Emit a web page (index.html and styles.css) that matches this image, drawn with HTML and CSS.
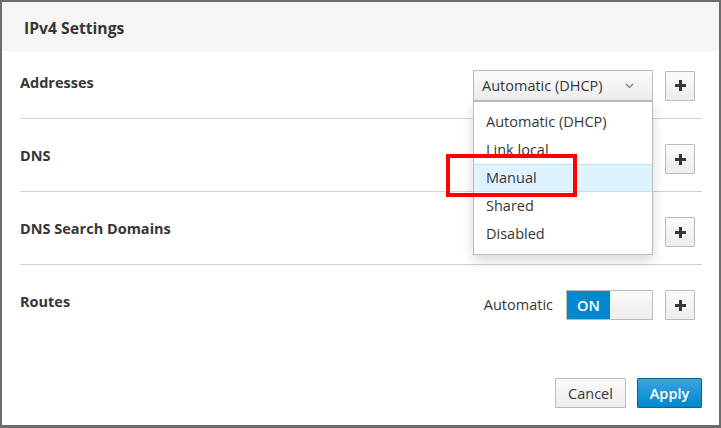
FILE: index.html
```html
<!DOCTYPE html>
<html>
<head>
<meta charset="utf-8">
<link rel="stylesheet" href="styles.css">
</head>
<body>
<div class="modal">
  <div class="modal-header"><h4 class="title">IPv4 Settings</h4></div>
  <div class="modal-body">
    <div class="row first">
      <div class="label">Addresses</div>
      <div class="controls">
        <div class="select-wrap">
          <div class="select">
            <span>Automatic (DHCP)</span>
            <svg class="chev" width="9" height="6" viewBox="0 0 9 6"><path d="M1 1 L4.5 4.5 L8 1" fill="none" stroke="#777" stroke-width="1.1"/></svg>
          </div>
          <ul class="menu">
            <li>Automatic (DHCP)</li>
            <li>Link local</li>
            <li class="active">Manual</li>
            <li>Shared</li>
            <li>Disabled</li>
          </ul>
          <div class="annot"></div>
        </div>
        <button class="btn plus"><svg width="11" height="11" viewBox="0 0 11 11"><rect x="4" y="0" width="3" height="11" fill="#363636"/><rect x="0" y="4" width="11" height="3" fill="#363636"/></svg></button>
      </div>
    </div>
    <div class="row">
      <div class="label">DNS</div>
      <div class="controls">
        <button class="btn plus"><svg width="11" height="11" viewBox="0 0 11 11"><rect x="4" y="0" width="3" height="11" fill="#363636"/><rect x="0" y="4" width="11" height="3" fill="#363636"/></svg></button>
      </div>
    </div>
    <div class="row">
      <div class="label">DNS Search Domains</div>
      <div class="controls">
        <button class="btn plus"><svg width="11" height="11" viewBox="0 0 11 11"><rect x="4" y="0" width="3" height="11" fill="#363636"/><rect x="0" y="4" width="11" height="3" fill="#363636"/></svg></button>
      </div>
    </div>
    <div class="row last">
      <div class="label">Routes</div>
      <div class="controls">
        <span class="auto">Automatic</span>
        <div class="switch"><span class="on">ON</span><span class="off"></span></div>
        <button class="btn plus"><svg width="11" height="11" viewBox="0 0 11 11"><rect x="4" y="0" width="3" height="11" fill="#363636"/><rect x="0" y="4" width="11" height="3" fill="#363636"/></svg></button>
      </div>
    </div>
  </div>
  <div class="modal-footer">
    <button class="btn cancel">Cancel</button>
    <button class="btn apply">Apply</button>
  </div>
</div>
</body>
</html>
```
FILE: styles.css
```css
html, body { margin: 0; padding: 0; }
body {
  background: #6d6d6d;
  width: 721px;
  height: 428px;
  padding: 2px 2px 3px 2px;
  box-sizing: border-box;
  font-family: "Open Sans", "Noto Sans", sans-serif;
  font-size: 14.5px;
  color: #363636;
  overflow: hidden;
}
.modal {
  background: #fff;
  height: 423px;
  display: flex;
  flex-direction: column;
}
.modal-header {
  height: 49px;
  background: #f5f5f5;
  display: flex;
  align-items: center;
  padding: 0 22px;
  flex: none;
}
.title {
  margin: 0;
  font-size: 15.7px;
  font-weight: 700;
  color: #363636;
  position: relative;
  top: 1px;
}
.modal-body {
  flex: 1;
  padding: 0 17px 0 18px;
}
.row {
  display: flex;
  align-items: flex-start;
  padding: 25px 0 17px;
  border-bottom: 1px solid #d1d1d1;
}
.row.first { padding-top: 19px; padding-bottom: 17px; }
.row.last { border-bottom: none; }
.label {
  font-weight: 700;
  line-height: 20px;
  padding-top: 2px;
}
.row.first .label { padding-top: 3px; }
.controls {
  margin-left: auto;
  margin-right: 7px;
  display: flex;
  align-items: center;
}
.btn {
  font-family: inherit;
  font-size: 14.5px;
  height: 30px;
  border: 1px solid #bbb;
  border-radius: 1px;
  background: linear-gradient(#fafafa, #ededed);
  color: #363636;
  padding: 0;
  box-sizing: border-box;
  cursor: pointer;
}
.plus {
  width: 30px;
  display: flex;
  align-items: center;
  justify-content: center;
}
.select-wrap {
  position: relative;
  margin-right: 12px;
}
.select {
  width: 180px;
  height: 31px;
  box-sizing: border-box;
  border: 1px solid #bbb;
  background: linear-gradient(#fafafa, #ededed);
  display: flex;
  align-items: center;
  padding: 0 18px 0 8px;
  justify-content: space-between;
  color: #363636;
}
.chev { margin-top: 1px; }
.menu {
  position: absolute;
  left: 0;
  top: 31px;
  width: 180px;
  box-sizing: border-box;
  margin: 0;
  padding: 6px 0;
  list-style: none;
  background: #fff;
  border: 1px solid #bbb;
  box-shadow: 0 6px 12px rgba(0,0,0,0.15);
  z-index: 5;
}
.menu li {
  height: 28px;
  line-height: 28px;
  padding-left: 12px;
  box-sizing: border-box;
  color: #363636;
}
.menu li.active {
  background: #def3ff;
  border-top: 1px solid #bee1f4;
  border-bottom: 1px solid #bee1f4;
  line-height: 26px;
}
.annot {
  position: absolute;
  left: -27px;
  top: 84px;
  width: 131px;
  height: 43px;
  box-sizing: border-box;
  border: 4px solid #f00;
  z-index: 6;
}
.auto {
  margin-right: 13px;
  line-height: 20px;
}
.switch {
  width: 87px;
  height: 30px;
  box-sizing: border-box;
  border: 1px solid #bbb;
  display: flex;
  margin-right: 12px;
}
.switch .on {
  width: 43px;
  background: #0088ce;
  color: #fff;
  font-weight: 600;
  display: flex;
  align-items: center;
  justify-content: center;
}
.switch .off {
  flex: 1;
  background: linear-gradient(#fafafa, #ededed);
}
.modal-footer {
  display: flex;
  justify-content: flex-end;
  padding: 0 17px 17px;
  gap: 11px;
}
.cancel { width: 71px; }
.apply {
  width: 65px;
  background: linear-gradient(#39a5dc, #0088ce);
  border-color: #00659c;
  color: #fff;
  font-weight: 600;
}
```
